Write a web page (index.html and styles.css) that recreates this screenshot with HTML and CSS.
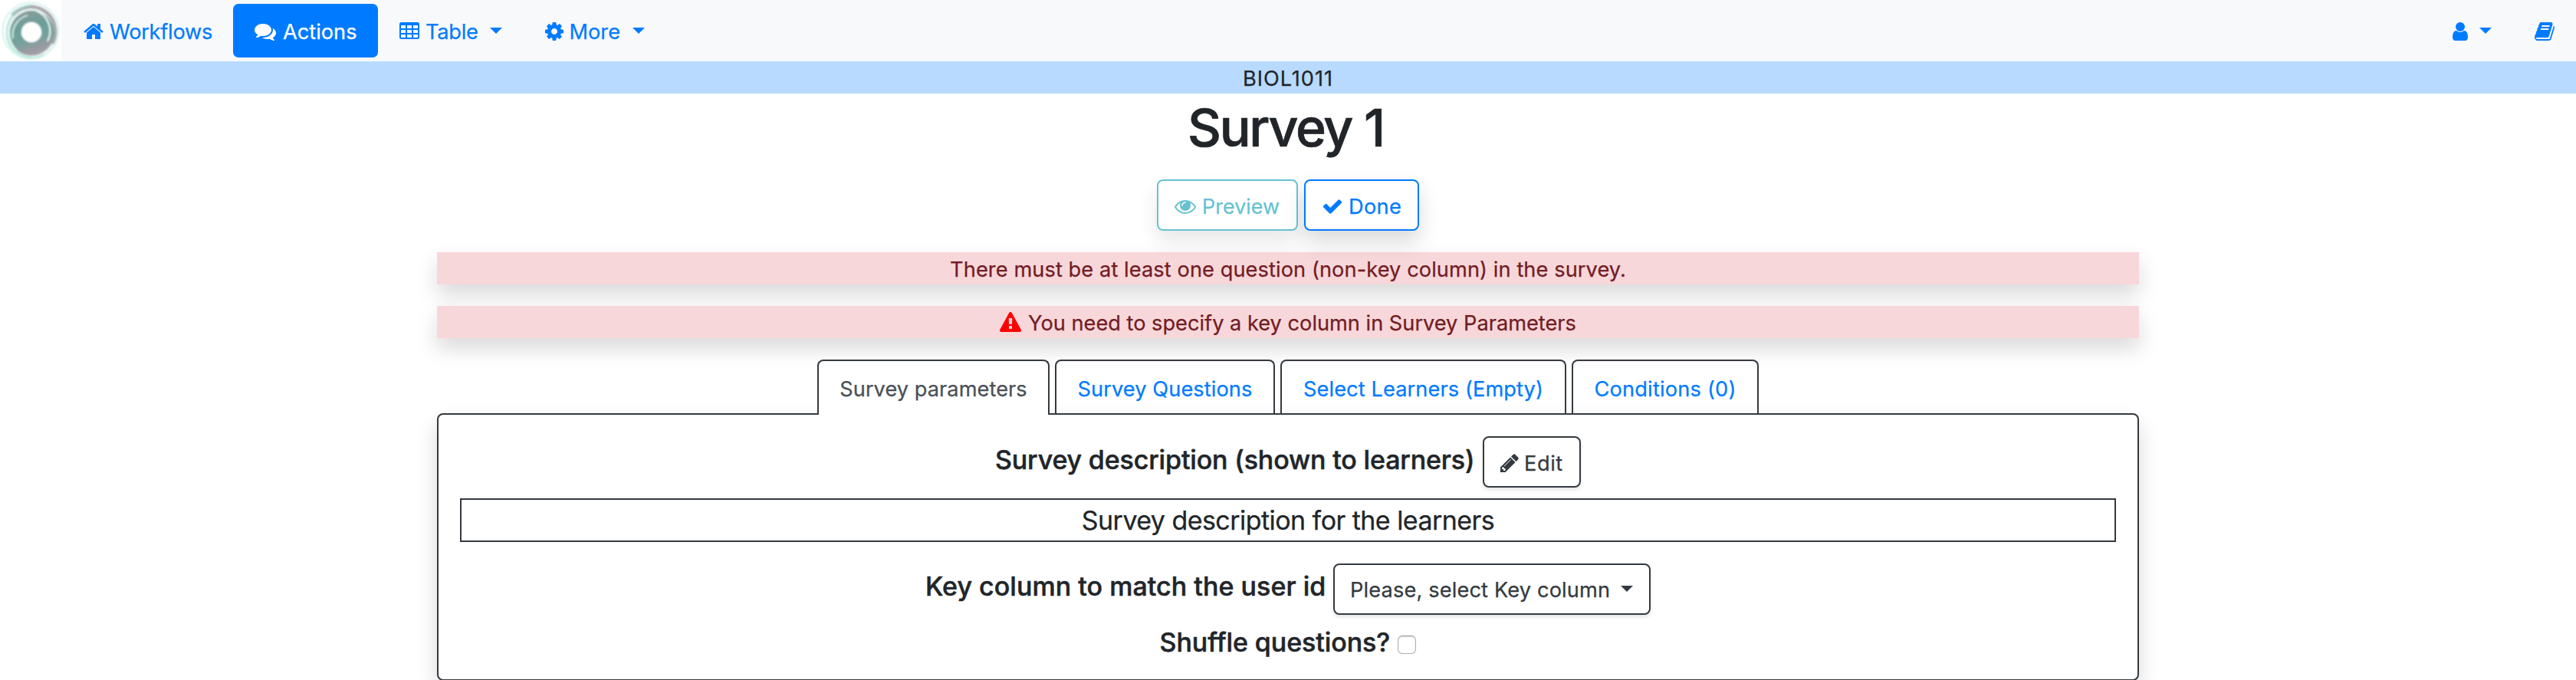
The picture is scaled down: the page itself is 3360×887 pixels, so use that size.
FILE: index.html
```html
<!DOCTYPE html>
<html lang="en">
<head>
<meta charset="utf-8">
<title>Survey 1</title>
<link rel="stylesheet" href="styles.css">
</head>
<body>
<nav class="navbar">
  <a class="brand">
    <svg width="80" height="80" viewBox="0 0 80 80">
      <defs>
        <linearGradient id="disc" x1="0.3" y1="0" x2="0.6" y2="1">
          <stop offset="0" stop-color="#8f9a9c"/>
          <stop offset="0.35" stop-color="#6c9f99"/>
          <stop offset="0.65" stop-color="#74a19c"/>
          <stop offset="0.85" stop-color="#9a9aa2"/>
          <stop offset="1" stop-color="#a5a3ab"/>
        </linearGradient>
        <filter id="soft"><feGaussianBlur stdDeviation="0.8"/></filter>
      </defs>
      <rect width="80" height="80" fill="#fff"/>
      <g filter="url(#soft)" fill="none">
        <circle cx="40" cy="40" r="36.5" stroke="#d3f2ea" stroke-width="2"/>
        <circle cx="41" cy="41" r="33" fill="#e6eceb"/>
        <path d="M16 20A32 32 0 0 1 71 32A32 32 0 0 1 68 57" stroke="#a9a7ae" stroke-width="4.5"/>
        <circle cx="41" cy="43" r="29.5" fill="url(#disc)"/>
        <path d="M41 75A33 33 0 0 1 11 30A34 34 0 0 1 40 7" stroke="#8fe0cf" stroke-width="1.6"/>
        <path d="M22 66A31 31 0 0 1 14 32A30 30 0 0 1 45 13A29 29 0 0 1 62 54" stroke="#e9fbf7" stroke-width="2"/>
        <path d="M17 50A26 26 0 0 1 36 20" stroke="#d5f5ee" stroke-width="1.8"/>
        <path d="M9 50A34 34 0 0 0 58 71" stroke="#a8e8da" stroke-width="1.5"/>
        <circle cx="41" cy="42" r="13.2" fill="#fff"/>
      </g>
    </svg>
  </a>
  <a class="nav-item nav-workflows">
    <svg class="icon" viewBox="0 0 1792 1792"><path d="M1472 992v480q0 26-19 45t-45 19h-384v-384h-256v384h-384q-26 0-45-19t-19-45v-480q0-1 .5-3t.5-3l575-474 575 474q1 2 1 6zm223-69l-62 74q-8 9-21 11h-3q-13 0-21-7l-692-577-692 577q-12 8-24 7-13-2-21-11l-62-74q-8-10-7-23.5t11-21.5l719-599q32-26 76-26t76 26l244 204v-195q0-14 9-23t23-9h192q14 0 23 9t9 23v408l219 182q10 8 11 21.5t-7 23.5z"/></svg>
    <span>Workflows</span>
  </a>
  <a class="nav-item nav-actions">
    <svg class="icon" viewBox="0 0 1792 1792"><path d="M1408 768q0 139-94 257t-256.5 186.5-353.5 68.5q-86 0-176-16-124 88-278 128-36 9-86 16h-3q-11 0-20.5-8t-11.5-21q-1-3-1-6.5t.5-6.5 2-6l2.5-5 3.5-5.5 4-5 4.5-5 4-4.5q5-6 23-25t26-29.5 22.5-29 25-38.5 20.5-44q-124-72-195-177t-71-224q0-139 94-257t256.5-186.5 353.5-68.5 353.5 68.5 256.5 186.5 94 257zm384 256q0 120-71 224.5t-195 176.5q10 24 20.5 44t25 38.5 22.5 29 26 29.5 23 25q1 1 4 4.5t4.5 5 4 5 3.5 5.5l2.5 5 2 6 .5 6.5-1 6.5q-3 14-13 22t-22 7q-50-7-86-16-154-40-278-128-90 16-176 16-271 0-472-132 58 4 88 4 161 0 309-45t264-129q125-92 192-212t67-254q0-77-23-152 129 71 204 178t75 230z"/></svg>
    <span>Actions</span>
  </a>
  <a class="nav-item nav-table">
    <svg class="icon" viewBox="0 0 1792 1792"><path fill-rule="evenodd" d="M224 128h1344a160 160 0 0 1 160 160v1088a160 160 0 0 1-160 160h-1344a160 160 0 0 1-160-160v-1088a160 160 0 0 1 160-160zM224 384a32 32 0 0 0-32 32v192a32 32 0 0 0 32 32h320a32 32 0 0 0 32-32v-192a32 32 0 0 0-32-32zM736 384a32 32 0 0 0-32 32v192a32 32 0 0 0 32 32h320a32 32 0 0 0 32-32v-192a32 32 0 0 0-32-32zM1248 384a32 32 0 0 0-32 32v192a32 32 0 0 0 32 32h320a32 32 0 0 0 32-32v-192a32 32 0 0 0-32-32zM224 768a32 32 0 0 0-32 32v192a32 32 0 0 0 32 32h320a32 32 0 0 0 32-32v-192a32 32 0 0 0-32-32zM736 768a32 32 0 0 0-32 32v192a32 32 0 0 0 32 32h320a32 32 0 0 0 32-32v-192a32 32 0 0 0-32-32zM1248 768a32 32 0 0 0-32 32v192a32 32 0 0 0 32 32h320a32 32 0 0 0 32-32v-192a32 32 0 0 0-32-32zM224 1152a32 32 0 0 0-32 32v192a32 32 0 0 0 32 32h320a32 32 0 0 0 32-32v-192a32 32 0 0 0-32-32zM736 1152a32 32 0 0 0-32 32v192a32 32 0 0 0 32 32h320a32 32 0 0 0 32-32v-192a32 32 0 0 0-32-32zM1248 1152a32 32 0 0 0-32 32v192a32 32 0 0 0 32 32h320a32 32 0 0 0 32-32v-192a32 32 0 0 0-32-32z"/></svg>
    <span>Table</span><i class="caret"></i>
  </a>
  <a class="nav-item nav-more">
    <svg class="icon" viewBox="0 0 1792 1792"><path d="M1152 896q0-106-75-181t-181-75-181 75-75 181 75 181 181 75 181-75 75-181zm512-109v222q0 12-8 23t-20 13l-185 28q-19 54-39 91 35 50 107 138 10 12 10 25t-9 23q-27 37-99 108t-94 71q-12 0-26-9l-138-108q-44 23-91 38-16 136-29 186-7 28-36 28h-222q-14 0-24.5-8.5t-11.5-21.5l-28-184q-49-16-90-37l-141 107q-10 9-25 9-14 0-25-11-126-114-165-168-7-10-7-23 0-12 8-23 15-21 51-66.5t54-70.5q-27-50-41-99l-183-27q-13-2-21-12.5t-8-23.5v-222q0-12 8-23t19-13l186-28q14-46 39-92-40-57-107-138-10-12-10-24 0-10 9-23 26-36 98.5-107.5t94.5-71.5q13 0 26 10l138 107q44-23 91-38 16-136 29-186 7-28 36-28h222q14 0 24.5 8.5t11.5 21.5l28 184q49 16 90 37l142-107q9-9 24-9 13 0 25 10 129 119 165 170 7 8 7 22 0 12-8 23-15 21-51 66.5t-54 70.5q26 50 41 98l183 28q13 2 21 12.5t8 23.5z"/></svg>
    <span>More</span><i class="caret"></i>
  </a>
  <div class="nav-right">
    <a class="nav-item">
      <svg class="icon" viewBox="0 0 1792 1792"><path d="M1536 1399q0 109-62.5 187t-150.5 78h-854q-88 0-150.5-78t-62.5-187q0-85 8.5-160.5t31.5-152 58.5-131 94-89 134.5-34.5q131 128 313 128t313-128q76 0 134.5 34.5t94 89 58.5 131 31.5 152 8.5 160.5zm-256-887q0 159-112.5 271.5t-271.5 112.5-271.5-112.5-112.5-271.5 112.5-271.5 271.5-112.5 271.5 112.5 112.5 271.5z"/></svg>
      <i class="caret"></i>
    </a>
    <a class="nav-item">
      <svg class="icon" viewBox="0 0 1792 1792"><path d="M1703 478q40 57 18 129l-275 906q-19 64-76.5 107.5t-122.5 43.5h-923q-77 0-148.5-53.5t-99.5-131.5q-24-67-2-127 0-4 3-27t4-37q1-8-3-21.5t-3-19.5q2-11 8-21t16.5-23.5 16.5-23.5q23-38 45-91.5t30-91.5q3-10 .5-30t-.5-28q3-11 17-28t17-23q21-36 42-92t25-90q1-9-2.5-32t.5-28q4-13 22-30.5t22-22.5q19-26 42.5-84.5t27.5-96.5q1-8-3-25.5t-2-26.5q2-8 9-18t18-23 17-21q8-12 16.5-30.5t15-35 16-36 19.5-32 26.5-23.5 36-11.5 47.5 5.5l-1 3q38-9 51-9h761q74 0 114 56t18 130l-274 906q-36 119-71.5 153.5t-128.5 34.5h-869q-27 0-38 15-11 16-1 43 24 70 144 70h923q29 0 56-15.5t35-41.5l300-987q7-22 5-57 38 15 59 43zm-1064 2q-4 13 2 22.5t20 9.5h608q13 0 25.5-9.5t16.5-22.5l21-64q4-13-2-22.5t-20-9.5h-608q-13 0-25.5 9.5t-16.5 22.5zm-83 256q-4 13 2 22.5t20 9.5h608q13 0 25.5-9.5t16.5-22.5l21-64q4-13-2-22.5t-20-9.5h-608q-13 0-25.5 9.5t-16.5 22.5z"/></svg>
    </a>
  </div>
</nav>
<div class="course">BIOL1011</div>
<h1 class="title">Survey 1</h1>
<div class="actions">
  <a class="btn btn-preview">
    <svg class="icon" viewBox="0 0 1792 1792"><path d="M1664 960q-152-236-381-353 61 104 61 225 0 185-131.5 316.5t-316.5 131.5-316.5-131.5-131.5-316.5q0-121 61-225-229 117-381 353 133 205 333.5 326.5t434.5 121.5 434.5-121.5 333.5-326.5zm-720-384q0-20-14-34t-34-14q-125 0-214.5 89.5t-89.5 214.5q0 20 14 34t34 14 34-14 14-34q0-86 61-147t147-61q20 0 34-14t14-34zm848 384q0 34-20 69-140 230-376.5 368.5t-499.5 138.5-499.5-139-376.5-368q-20-35-20-69t20-69q140-229 376.5-368t499.5-139 499.5 139 376.5 368q20 35 20 69z"/></svg>
    <span>Preview</span>
  </a>
  <a class="btn btn-done">
    <svg class="icon" viewBox="0 0 1792 1792"><path d="M1671 566q0 40-28 68l-724 724-136 136q-28 28-68 28t-68-28l-136-136-362-362q-28-28-28-68t28-68l136-136q28-28 68-28t68 28l294 295 656-657q28-28 68-28t68 28l136 136q28 28 28 68z"/></svg>
    <span>Done</span>
  </a>
</div>
<main class="container">
  <div class="alert alert-question"><span>There must be at least one question (non-key column) in the survey.</span></div>
  <div class="alert alert-key">
    <svg class="icon" viewBox="0 0 1792 1792"><path d="M1024 1375v-190q0-14-9.5-23.5t-22.5-9.5h-192q-13 0-22.5 9.5t-9.5 23.5v190q0 14 9.5 23.5t22.5 9.5h192q13 0 22.5-9.5t9.5-23.5zm-2-374l18-459q0-12-10-19-13-11-24-11h-220q-11 0-24 11-10 7-10 21l17 457q0 10 10 16.5t24 6.5h185q14 0 23.5-6.5t10.5-16.5zm-14-934l768 1408q35 63-2 126-17 29-46.5 46t-63.5 17h-1536q-34 0-63.5-17t-46.5-46q-37-63-2-126l768-1408q17-31 47-49t65-18 65 18 47 49z"/></svg>
    <span>You need to specify a key column in Survey Parameters</span>
  </div>
  <div class="tabs">
    <a class="tab tab-parameters active">Survey parameters</a>
    <a class="tab tab-questions">Survey Questions</a>
    <a class="tab tab-learners">Select Learners (Empty)</a>
    <a class="tab tab-conditions">Conditions (0)</a>
  </div>
  <section class="card">
    <div class="row row-description">
      <h5>Survey description (shown to learners)</h5>
      <a class="btn btn-edit">
        <svg class="icon" viewBox="0 0 1792 1792"><path d="M491 1536l91-91-235-235-91 91v107h128v128h107zm523-928q0-22-22-22-10 0-17 7l-542 542q-7 7-7 17 0 22 22 22 10 0 17-7l542-542q7-7 7-17zm-54-192l416 416-832 832h-416v-416zm683 96q0 53-37 90l-166 166-416-416 166-165q36-38 90-38 53 0 91 38l235 234q37 39 37 91z"/></svg>
        <span>Edit</span>
      </a>
    </div>
    <div class="description">Survey description for the learners</div>
    <div class="row row-key">
      <h5>Key column to match the user id</h5>
      <a class="btn btn-select"><span>Please, select Key column</span><i class="caret"></i></a>
    </div>
    <div class="row row-shuffle">
      <h5>Shuffle questions?</h5>
      <input class="check" type="checkbox">
    </div>
  </section>
</main>
</body>
</html>
```
FILE: styles.css
```css
* { box-sizing: border-box; }

html { overflow: hidden; }

body {
  margin: 0;
  background: #fff;
  color: #212529;
  font-family: Inter, "Liberation Sans", sans-serif;
  font-size: 27.2px;
  line-height: 42px;
  white-space: nowrap;
  -webkit-text-stroke: 0.25px currentColor;
}

.icon {
  width: 28px;
  height: 28px;
  flex: none;
  fill: currentColor;
  overflow: visible;
}

.caret {
  width: 16px;
  border-top: 8px solid currentColor;
  border-left: 8px solid transparent;
  border-right: 8px solid transparent;
  margin-top: -2px;
  flex: none;
}

.nav-item span, .btn span, .alert span { padding-top: 2px; }

/* Navigation */
.navbar {
  display: flex;
  align-items: center;
  height: 80px;
  background: #f8f9fa;
  color: #007bff;
}

.brand { display: flex; width: 80px; height: 80px; }

.nav-item {
  display: flex;
  align-items: center;
  height: 70px;
  padding-top: 2px;
}

.nav-workflows { width: 224px; padding-left: 27.5px; gap: 7.5px; letter-spacing: -0.25px; }

.nav-actions {
  width: 189px;
  padding-left: 28px;
  gap: 9px;
  border-radius: 7px;
  background: #007bff;
  color: #fff;
}

.nav-table { width: 188px; padding-left: 26.5px; gap: 7.5px; letter-spacing: -0.26px; }
.nav-table .caret { margin-left: 7.5px; }
.nav-more { padding-left: 28px; gap: 5.5px; }
.nav-more .caret { margin-left: 10.5px; }

.nav-right { display: flex; margin-left: auto; padding-right: 27px; gap: 55px; }
.nav-right .nav-item { gap: 11px; }

.course {
  height: 42px;
  padding-top: 2px;
  background: #b8daff;
  text-align: center;
  letter-spacing: 0.96px;
}

.title {
  margin: 0;
  height: 88px;
  font-size: 68px;
  font-weight: 500;
  line-height: 88px;
  letter-spacing: -2.27px;
  text-align: center;
  text-indent: -6px;
  -webkit-text-stroke-width: 0.7px;
}

/* Buttons */
.btn {
  display: flex;
  align-items: center;
  height: 67px;
  padding: 3px 0 0 21px;
  border: 2px solid;
  border-radius: 8px;
}

.actions {
  position: relative;
  z-index: 1;
  display: flex;
  justify-content: center;
  gap: 8px;
  margin: 24px 0 28px;
}

.actions .btn { box-shadow: 0 14px 28px rgba(0, 0, 0, 0.15); }
.btn-preview { width: 184px; gap: 8px; color: #17a2b8; opacity: 0.65; letter-spacing: -0.11px; }
.btn-done { width: 150px; gap: 7px; color: #007bff; letter-spacing: 0.3px; }
.btn-edit { width: 128px; gap: 5px; padding-left: 19px; letter-spacing: 0.6px; }
.btn-select { width: 414px; gap: 14px; padding: 1px 0 0 20px; letter-spacing: 0.147px; }

.btn-edit, .btn-select {
  color: #343a40;
  box-shadow: 0 3px 4px rgba(0, 0, 0, 0.1);
}

/* Alerts */
.container { width: 2220px; margin: 0 auto; }

.alert {
  display: flex;
  align-items: center;
  justify-content: center;
  height: 42px;
  margin-bottom: 28px;
  padding-top: 2px;
  background: #f8d7da;
  color: #721c24;
  box-shadow: 0 14px 28px rgba(0, 0, 0, 0.15);
}

.alert-question { letter-spacing: 0.09px; }
.alert-key { gap: 9px; }
.alert-key .icon { fill: #f00; }

/* Tabs */
.tabs {
  display: flex;
  justify-content: center;
  gap: 7px;
  margin-bottom: -2px;
}

.tab {
  height: 72px;
  padding-top: 16px;
  border: 2px solid #343a40;
  border-bottom: 0;
  border-radius: 8px 8px 0 0;
  color: #007bff;
  text-align: center;
}

.tab.active {
  position: relative;
  z-index: 1;
  background: #fff;
  color: #495057;
}

.tab-parameters { width: 303px; letter-spacing: 0.05px; }
.tab-questions { width: 287px; letter-spacing: 0.09px; }
.tab-learners { width: 373px; letter-spacing: 0.1px; }
.tab-conditions { width: 244px; letter-spacing: 0.2px; }

/* Card */
.card {
  height: 349px;
  padding: 28px;
  border: 2px solid #343a40;
  border-radius: 8px;
  background: #fff;
  box-shadow: 0 14px 28px rgba(0, 0, 0, 0.15);
}

.row { display: flex; align-items: center; justify-content: center; }

h5 {
  margin: 0;
  font-size: 34px;
  font-weight: 500;
  line-height: 42px;
  -webkit-text-stroke-width: 0.5px;
}

.row-description { gap: 10.6px; }
.row-description h5 { margin-bottom: 6px; letter-spacing: -0.153px; }
.row-key { gap: 9.6px; margin-top: 28px; }
.row-key h5 { margin-bottom: 8px; letter-spacing: 0.04px; }
.row-shuffle { height: 34px; margin-top: 19px; gap: 10.3px; }
.row-shuffle h5 { letter-spacing: -0.083px; }

.description {
  height: 57px;
  margin-top: 14px;
  border: 2px solid #343a40;
  font-size: 34px;
  line-height: 53px;
  letter-spacing: -0.552px;
  text-align: center;
}

.check {
  appearance: none;
  width: 24px;
  height: 24px;
  margin: 6px 0 0;
  border: 1px solid #b0b0b0;
  border-top-color: #959595;
  border-radius: 6px;
  background: #fff;
  box-shadow: inset 0 1px 2px rgba(0, 0, 0, 0.15);
}
```
